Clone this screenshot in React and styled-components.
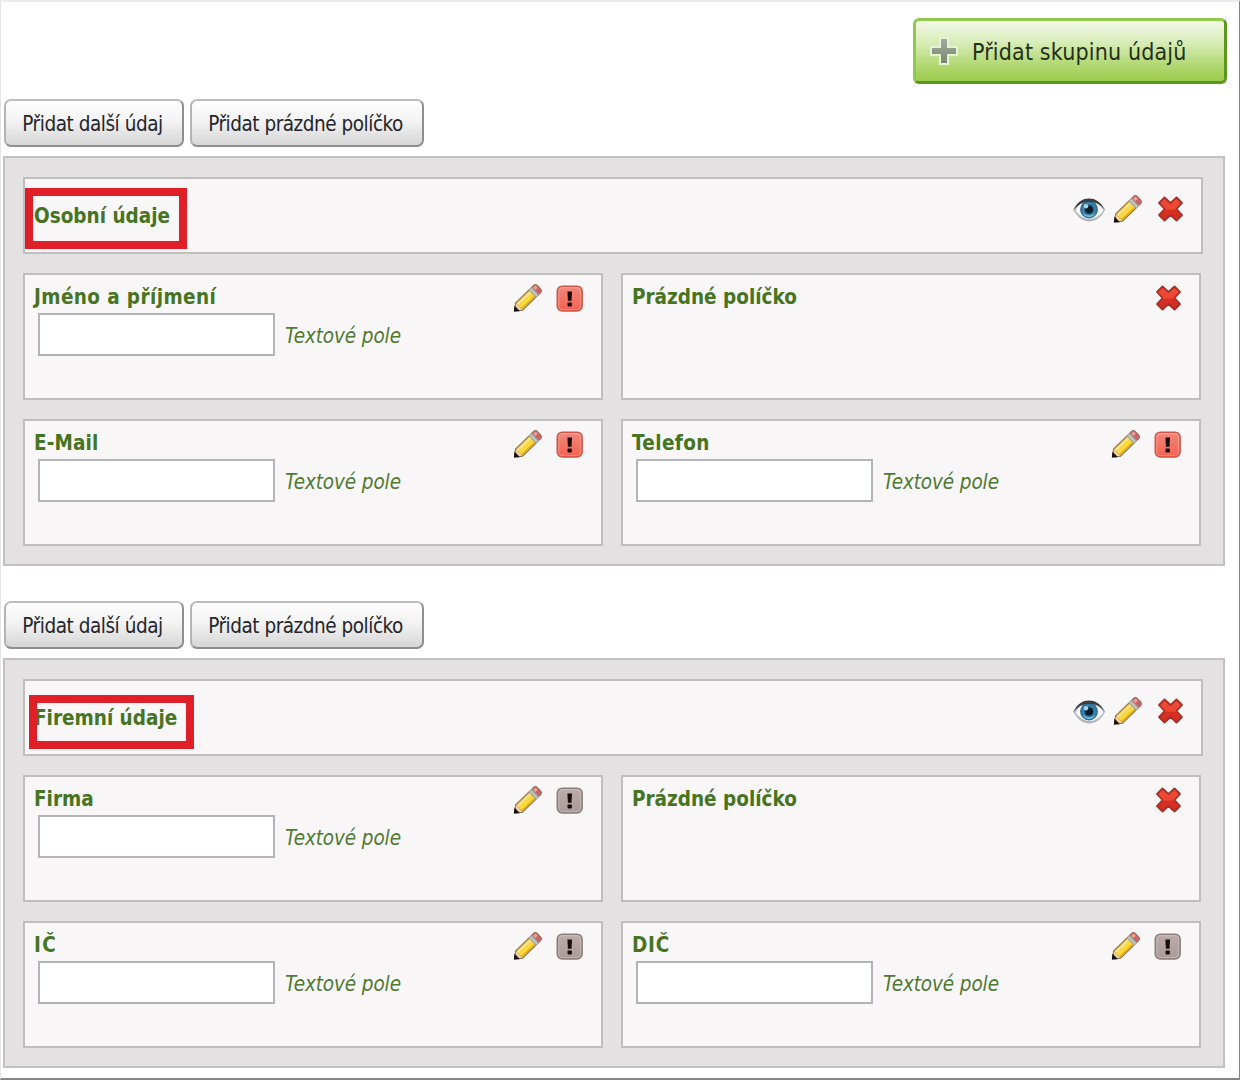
import React from 'react';
import styled, { createGlobalStyle } from 'styled-components';

const Global = createGlobalStyle`
  * { box-sizing: border-box; }
  body { margin: 0; background: #fff; }
`;

const Page = styled.main`
  width: 1240px;
  height: 1080px;
  padding: 16px 0 0 2px;
  border: 1px solid #e6e6e8;
  border-top: 2px solid #ececf0;
  border-right-color: #858585;
  border-bottom: 2px solid #858585;
  font-family: "DejaVu Sans Condensed", "DejaVu Sans", sans-serif;
  font-stretch: condensed;
  overflow: hidden;
`;

const TopBar = styled.header`
  display: flex;
  justify-content: flex-end;
  padding-right: 12px;
  margin-bottom: 15px;
`;

const AddGroupButton = styled.button`
  display: flex;
  align-items: center;
  width: 314px;
  height: 66px;
  padding: 0 0 0 12px;
  gap: 13px;
  border: 3px solid;
  border-color: #93c84f #5c971d #5c971d #93c84f;
  border-radius: 6px;
  background: linear-gradient(#f2f7e6 0%, #d9edb9 35%, #b4da78 70%, #9ccc4c 100%);
  color: #24301a;
  font: inherit;
  font-size: 23px;
  letter-spacing: ${(p) => p.$track || 0}px;
  white-space: nowrap;
  span { padding-top: 2px; }
  svg { margin-bottom: 2px; }
`;

const Group = styled.section`
  width: 1222px;
  margin-bottom: 35px;
`;

const Toolbar = styled.div`
  display: flex;
  gap: 6px;
  margin: 0 0 9px 0;
  padding-left: 1px;
`;

const ToolButton = styled.button`
  width: ${(p) => p.$width}px;
  height: 48px;
  padding: 2px 3px 0 0;
  border: 2px solid;
  border-color: #bdbdbd #8e8e8e #8e8e8e #b4b4b4;
  border-radius: 7px;
  background: linear-gradient(#fefefe 0%, #f3f3f3 45%, #d6d6d6 100%);
  color: #25252b;
  font: inherit;
  font-size: 20.5px;
  letter-spacing: ${(p) => p.$track}px;
  white-space: nowrap;
`;

const Panel = styled.div`
  height: 410px;
  padding: 19px 18px;
  border: 2px solid #c2c1c2;
  background: #e3e1e2;
`;

const box = `
  border: 2px solid #bfbdbe;
  background: #f8f6f7;
`;

const GroupHeader = styled.div`
  ${box}
  position: relative;
  display: flex;
  justify-content: space-between;
  width: 1180px;
  height: 77px;
  padding: 16px 18px 0 9px;
  margin-bottom: 19px;
`;

const Title = styled.h2`
  margin: ${(p) => p.$top || 0}px 0 0;
  color: #46741f;
  font-size: 20.5px;
  line-height: 26px;
  font-weight: bold;
  letter-spacing: ${(p) => p.$track || 0}px;
  white-space: nowrap;
`;

const Highlight = styled.span`
  position: absolute;
  left: ${(p) => p.$x}px;
  top: ${(p) => p.$y}px;
  width: ${(p) => p.$w}px;
  height: ${(p) => p.$h}px;
  border: 8px solid #e02029;
`;

const HeaderIcons = styled.div`
  display: flex;
  align-items: flex-start;
  svg + svg { margin-left: 7px; }
  svg:last-child { margin: 1px 0 0 16px; }
`;

const Cards = styled.div`
  display: grid;
  grid-template-columns: 580px 580px;
  grid-auto-rows: 127px;
  gap: 19px 18px;
`;

const Card = styled.article`
  ${box}
  padding: 9px 17px 0 9px;
`;

const CardTop = styled.div`
  display: flex;
  justify-content: space-between;
  height: 29px;
`;

const CardIcons = styled.div`
  display: flex;
  gap: 14px;
  padding-right: ${(p) => (p.$single ? 1 : 0)}px;
  padding-top: ${(p) => (p.$single ? 1 : 0)}px;
`;

const Field = styled.label`
  display: flex;
  align-items: center;
  gap: 10px;
  padding-left: 4px;
`;

const Input = styled.input`
  width: 237px;
  height: 43px;
  border: 2px solid #b3b4b8;
  background: #fff;
  border-radius: 0;
`;

const Hint = styled.em`
  padding-top: 2px;
  color: #4f7a33;
  font-size: 20.5px;
  letter-spacing: ${(p) => p.$track || 0}px;
`;

const Plus = () => (
  <svg width="31" height="31" viewBox="0 0 31 31">
    <defs>
      <linearGradient id="plus" x2="0" y2="1">
        <stop offset="0" stopColor="#a3ada0" />
        <stop offset="1" stopColor="#76866b" />
      </linearGradient>
    </defs>
    <path d="M12 3h8v9h9v8h-9v9h-8v-9H3v-8h9z" fill="url(#plus)" stroke="#e8f2d8" strokeWidth="2" />
  </svg>
);

const Eye = () => (
  <svg width="34" height="29" viewBox="0 0 34 29">
    <defs>
      <radialGradient id="iris">
        <stop offset="0.25" stopColor="#173c56" />
        <stop offset="0.65" stopColor="#3a86b2" />
        <stop offset="1" stopColor="#2a6688" />
      </radialGradient>
    </defs>
    <path d="M1.500 15C6 7 11 4 17 4s11 3 16 11C29 23 23 26.500 17 26.500S6 23 1.500 15z" fill="#b4b7bb" />
    <path d="M3.500 15.500C7 9 11 6 17 6s11 3 14.500 9.500C27.500 21.500 22 24 17.500 24S8 22 3.500 15.500z" fill="#f3f5f7" />
    <circle cx="17" cy="14.500" r="8.900" fill="url(#iris)" />
    <path d="M10.500 18q6.500 5 13 0q-2 4-6.500 4T10.500 18z" fill="#7cc0df" />
    <circle cx="17" cy="14.500" r="4" fill="#0a1d2b" />
    <circle cx="14" cy="11.300" r="2.200" fill="#a9d5e9" />
    <path d="M1 15.500C5.500 6.500 10.500 3.500 17 3.500S28.500 6.500 33.500 15.500C28.500 9.500 23.500 6.800 17 6.800S6.500 9.500 1 15.500z" fill="#383d42" />
  </svg>
);

const Pencil = () => (
  <svg width="29" height="29" viewBox="0 0 29 29" overflow="visible">
    <g transform="translate(1 27.400) rotate(-44) scale(1.050)">
      <path d="M0 0L6.500 -5.300H31Q33.500 -5 33.500 -2.500V2.500Q33.500 5 31 5.300H6.500z" fill="#806d4e" />
      <path d="M1 0L7 -4.500V4.500z" fill="#f1cc9f" />
      <path d="M-.2 0L4.200 -3.700V3.700z" fill="#15120f" />
      <rect x="7" y="-4.500" width="18" height="9" fill="#e2ae28" />
      <rect x="7" y="-3.600" width="18" height="2.600" fill="#f5e48b" />
      <rect x="7" y="-1" width="18" height="3.600" fill="#fcd936" />
      <rect x="24" y="-5" width="4.500" height="10" fill="#a7a69f" />
      <rect x="25.500" y="-4.500" width="1.200" height="9" fill="#ced0ca" />
      <path d="M28.500 -4.800H31Q33 -4.600 33 -2.500V2.500Q33 4.600 31 4.800H28.500z" fill="#cc6367" />
      <rect x="28.800" y="-3.500" width="3.200" height="3" fill="#eaa09f" />
    </g>
  </svg>
);

const Cross = () => (
  <svg width="25" height="26" viewBox="0 0 25 26">
    <defs>
      <linearGradient id="cross" x2="0" y2="1">
        <stop offset="0" stopColor="#ea4b38" />
        <stop offset="0.500" stopColor="#ee4632" />
        <stop offset="0.550" stopColor="#d92e22" />
        <stop offset="1" stopColor="#cd3026" />
      </linearGradient>
    </defs>
    <path
      d="M6.500 1.500L12.500 7L18.500 1.500L24 7L18.500 13L24 19L18.500 24.500L12.500 19L6.500 24.500L1 19L6.500 13L1 7z"
      fill="url(#cross)" stroke="#a92f27" strokeWidth="1.800" strokeLinejoin="round"
    />
  </svg>
);

const Alert = ({ required }) => {
  const id = required ? 'alertOn' : 'alertOff';
  return (
    <svg width="28" height="29" viewBox="0 0 28 29">
      <defs>
        <linearGradient id={id} x2="0" y2="1">
          <stop offset="0" stopColor={required ? '#f0897c' : '#bcabaa'} />
          <stop offset="1" stopColor={required ? '#f5604f' : '#a99b99'} />
        </linearGradient>
      </defs>
      <rect x="1.300" y="2.200" width="24.800" height="24.800" rx="5" fill={`url(#${id})`} stroke={required ? '#cf5548' : '#8c7d7b'} strokeWidth="1.600" />
      <rect x="2.800" y="3.700" width="21.800" height="21.800" rx="3.500" fill="none" stroke="#fff" strokeOpacity=".22" strokeWidth="1.200" />
      <path d="M11.400 7.400h4.600l-.5 9.400h-3.600z" fill="#1c0d0d" />
      <rect x="11.500" y="18.600" width="4.400" height="3.800" rx=".8" fill="#1c0d0d" />
    </svg>
  );
};

const groups = [
  {
    title: 'Osobní údaje',
    track: 0,
    mark: { $x: 0, $y: 9, $w: 162, $h: 61 },
    required: true,
    cards: [
      { label: 'Jméno a příjmení', track: 0.4 },
      { label: 'Prázdné políčko', track: 0, empty: true },
      { label: 'E-Mail', track: 0.1 },
      { label: 'Telefon', track: 0.4 },
    ],
  },
  {
    title: 'Firemní údaje',
    track: 0,
    mark: { $x: 4, $y: 14, $w: 165, $h: 54 },
    required: false,
    cards: [
      { label: 'Firma', track: 0 },
      { label: 'Prázdné políčko', track: 0, empty: true },
      { label: 'IČ', track: 1.5 },
      { label: 'DIČ', track: 0.8 },
    ],
  },
];

const FieldCard = ({ label, track, empty, required }) => (
  <Card>
    <CardTop>
      <Title $track={track}>{label}</Title>
      <CardIcons $single={empty}>
        {empty ? <Cross /> : (<><Pencil /><Alert required={required} /></>)}
      </CardIcons>
    </CardTop>
    {!empty && (
      <Field>
        <Input type="text" />
        <Hint $track={-0.1}>Textové pole</Hint>
      </Field>
    )}
  </Card>
);

export default function App() {
  return (
    <>
      <Global />
      <Page>
        <TopBar>
          <AddGroupButton $track={0.15}><Plus /><span>Přidat skupinu údajů</span></AddGroupButton>
        </TopBar>
        {groups.map((g) => (
          <Group key={g.title}>
            <Toolbar>
              <ToolButton $width={180} $track={-0.45}>Přidat další údaj</ToolButton>
              <ToolButton $width={234} $track={-0.47}>Přidat prázdné políčko</ToolButton>
            </Toolbar>
            <Panel>
              <GroupHeader>
                <Title $top={8} $track={g.track}>{g.title}</Title>
                <HeaderIcons><Eye /><Pencil /><Cross /></HeaderIcons>
                <Highlight {...g.mark} />
              </GroupHeader>
              <Cards>
                {g.cards.map((c) => <FieldCard key={c.label} {...c} required={g.required} />)}
              </Cards>
            </Panel>
          </Group>
        ))}
      </Page>
    </>
  );
}
